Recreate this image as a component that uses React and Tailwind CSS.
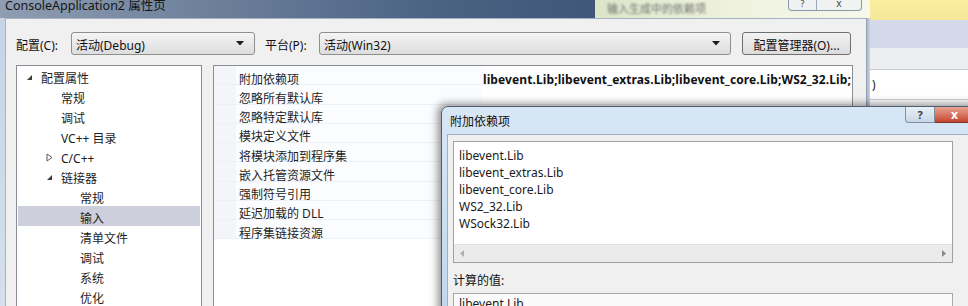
import React from "react";

const font = "font-['Noto_Sans','Noto_Sans_CJK_SC',sans-serif]";

const treeItems = [
  { label: "配置属性", level: 0, arrow: "open" },
  { label: "常规", level: 1 },
  { label: "调试", level: 1 },
  { label: "VC++ 目录", level: 1 },
  { label: "C/C++", level: 1, arrow: "closed" },
  { label: "链接器", level: 1, arrow: "open" },
  { label: "常规", level: 2 },
  { label: "输入", level: 2, selected: true },
  { label: "清单文件", level: 2 },
  { label: "调试", level: 2 },
  { label: "系统", level: 2 },
  { label: "优化", level: 2 },
];

const props = [
  { label: "附加依赖项", value: "libevent.Lib;libevent_extras.Lib;libevent_core.Lib;WS2_32.Lib;" },
  { label: "忽略所有默认库" },
  { label: "忽略特定默认库" },
  { label: "模块定义文件" },
  { label: "将模块添加到程序集" },
  { label: "嵌入托管资源文件" },
  { label: "强制符号引用" },
  { label: "延迟加载的 DLL" },
  { label: "程序集链接资源" },
];

const libs = ["libevent.Lib", "libevent_extras.Lib", "libevent_core.Lib", "WS2_32.Lib", "WSock32.Lib"];

const OpenArrow = () => (
  <svg width="7" height="7" viewBox="0 0 7 7">
    <polygon points="6,1 6,6 1,6" fill="#3c3c3c" />
  </svg>
);

const ClosedArrow = () => (
  <svg width="7" height="9" viewBox="0 0 7 9">
    <polygon points="1,1 6,4.5 1,8" fill="none" stroke="#5a5a5a" strokeWidth="1" />
  </svg>
);

const Combo = ({ text, width }) => (
  <div
    className={`flex items-center h-[23px] ${width} rounded-[3px] border border-[#8e8f8f] bg-gradient-to-b from-[#f5f5f5] to-[#dddddd] pl-[4px] pr-[10px]`}
  >
    <span className="flex-1 text-[12px] text-[#111] pt-[4px]">{text}</span>
    <svg width="8" height="5" viewBox="0 0 8 5">
      <polygon points="0,0 8,0 4,4.5" fill="#1c1c1c" />
    </svg>
  </div>
);

const TreeRow = ({ item }) => {
  const pad = item.level === 0 ? "pl-[8px]" : item.level === 1 ? "pl-[28px]" : "pl-[62px]";
  return (
    <div
      className={`flex items-center h-[20px] ${pad} ${item.selected ? "bg-[#cdd0dc]" : ""}`}
    >
      {item.arrow && (
        <span className="w-[15px] flex items-center pt-[2px]">
          {item.arrow === "open" ? <OpenArrow /> : <ClosedArrow />}
        </span>
      )}
      {!item.arrow && item.level === 1 && <span className="w-[15px]" />}
      <span className="text-[12px] text-[#1e1e1e] pt-[6px]">{item.label}</span>
    </div>
  );
};

const MainWindow = () => (
  <div className="flex flex-col w-[870px] h-[306px] shrink-0">
    {/* title bar */}
    <div className="relative flex h-[20px] bg-gradient-to-r from-[#8e9db2] via-[#4b6283] to-[#2c4466]">
      <div className="w-[595px] pl-[5px] -mt-[3px] text-[12.5px] text-[#151515]">ConsoleApplication2 属性页</div>
      <div className="flex-1 flex bg-gradient-to-r from-[#dbe5c8] via-[#eef2de] to-[#f6f8ea]">
        <span className="pl-[12px] pt-[1px] text-[11px] text-[#707070] blur-[1.2px]">输入生成中的依赖项</span>
      </div>
      <div className="absolute left-[788px] top-0 flex h-[11px] w-[74px] rounded-b-[4px] border border-t-0 border-[#8b98a8] bg-[#eef1f4]/80 overflow-hidden">
        <div className="w-[28px] border-r border-[#9aa6b4] flex justify-center">
          <span className="text-[9px] leading-[8px] text-[#444]">?</span>
        </div>
        <div className="flex-1 flex justify-center">
          <span className="text-[10px] leading-[7px] text-[#444]">x</span>
        </div>
      </div>
    </div>
    {/* frame + client */}
    <div className="flex flex-1 bg-gradient-to-b from-[#c6d4e6] to-[#d6e0ec]">
      <div className="w-[5px]" />
      <div className={`flex-1 flex flex-col bg-[#f0f0f0] border-t border-l border-[#a7b3c3] pt-[13px] pl-[10px] pr-[13px] ${font}`}>
        <div className="flex items-center h-[23px]">
          <span className="w-[55px] text-[12px] text-[#111] pt-[4px]">配置(C):</span>
          <Combo text="活动(Debug)" width="w-[184px]" />
          <span className="ml-[10px] w-[54px] text-[12px] text-[#111] pt-[4px]">平台(P):</span>
          <Combo text="活动(Win32)" width="w-[412px]" />
          <div className="ml-[11px] flex items-center justify-center h-[23px] w-[109px] rounded-[3px] border border-[#707070] bg-gradient-to-b from-[#f3f3f3] to-[#dcdcdc] text-[12px] text-[#111] pt-[4px]">
            配置管理器(O)...
          </div>
        </div>
        <div className="flex flex-1 mt-[10px] gap-[11px]">
          <div className="w-[186px] border border-b-0 border-[#8a8e96] bg-white px-[1px]">
            {treeItems.map((item, i) => (
              <TreeRow key={i} item={item} />
            ))}
          </div>
          <div className="flex-1 border border-b-0 border-[#8a8e96] bg-white">
            {props.map((p, i) => (
              <div key={i} className="flex h-[19.25px] items-center border-b border-[#eef0f4]">
                <div className="w-[22px] h-full bg-[#f3f5f9]" />
                <div className="w-[247px] pl-[3px] pt-[9px] text-[12px] text-[#1e1e1e] bg-[#fbfcfe] h-full flex items-center">{p.label}</div>
                <div className="flex-1 pt-[9px] text-[12px] font-bold text-[#111] tracking-[0.1px] whitespace-nowrap overflow-hidden">
                  {p.value}
                </div>
              </div>
            ))}
          </div>
        </div>
      </div>
      <div className="w-[4px] bg-gradient-to-r from-[#aab8ca] to-[#c9d5e4] border-l border-[#97a3b3]" />
    </div>
  </div>
);

const BackWindow = () => (
  <div className={`flex-1 flex flex-col ${font}`}>
    <div className="h-[20px] bg-gradient-to-b from-[#fbee9f] to-[#f6e79a]" />
    <div className="h-[28px] bg-[#d4d9ea]" />
    <div className="h-[22px] bg-[#eceef1] border-b border-[#c8ccd2]" />
    <div className="h-[30px] bg-white flex items-center pl-[2px] text-[12px] text-[#222] border-b border-[#d0d4da]">)</div>
    <div className="flex-1 bg-white" />
  </div>
);

const Dialog = () => (
  <div
    className={`absolute left-[441px] top-[106px] w-[560px] h-[230px] rounded-tl-[7px] border border-[#4f5e72] bg-gradient-to-b from-[#d8e7f6] to-[#bed5ec] shadow-[-3px_-2px_9px_rgba(0,0,0,0.45)] flex flex-col ${font}`}
  >
    <div className="relative h-[27px] flex items-center pl-[8px]">
      <span className="text-[12px] text-[#111] pt-[2px]">附加依赖项</span>
      <div className="absolute left-[463px] top-0 flex h-[16px]">
        <div className="w-[30px] flex items-center justify-center rounded-bl-[4px] border border-t-0 border-[#7e8ea4] bg-gradient-to-b from-[#e9f0f7] to-[#c9d7e6]">
          <span className="text-[11px] leading-[11px] text-[#3a3a3a] font-bold">?</span>
        </div>
        <div className="w-[45px] flex items-center pl-[16px] border-b border-[#7a3428] bg-gradient-to-b from-[#e8a493] to-[#c5432f]">
          <span className="text-[12px] leading-[12px] text-white font-bold">x</span>
        </div>
      </div>
    </div>
    <div className="flex-1 ml-[5px] bg-[#f0f0f0] border-t border-l border-[#9fb0c5] pt-[6px] pl-[5px] flex flex-col">
      <div className="w-[500px] h-[122px] border border-[#a0a0a0] bg-white flex flex-col">
        <div className="flex-1 pt-[5px] pl-[5px]">
          {libs.map((l) => (
            <div key={l} className="h-[17px] text-[12px] leading-[17px] text-[#1a1a1a]">
              {l}
            </div>
          ))}
        </div>
        <div className="h-[18px] bg-[#ebebeb] border-t border-[#e2e2e2] flex items-center justify-between px-[6px]">
          <svg width="5" height="7" viewBox="0 0 5 7">
            <polygon points="4,0 4,7 0,3.5" fill="#b0b0b0" />
          </svg>
          <svg width="5" height="7" viewBox="0 0 5 7">
            <polygon points="1,0 1,7 5,3.5" fill="#8a8a8a" />
          </svg>
        </div>
      </div>
      <div className="h-[30px] flex items-center text-[12px] text-[#111] pt-[5px]">计算的值:</div>
      <div className="w-[500px] flex-1 border border-[#a9a9a9] bg-[#fafafa] pl-[5px] pt-[1px] text-[12px] text-[#1a1a1a]">
        libevent.Lib
      </div>
    </div>
  </div>
);

export default function App() {
  return (
    <div className={`relative w-[968px] h-[306px] overflow-hidden bg-white flex ${font}`}>
      <MainWindow />
      <BackWindow />
      <Dialog />
    </div>
  );
}
